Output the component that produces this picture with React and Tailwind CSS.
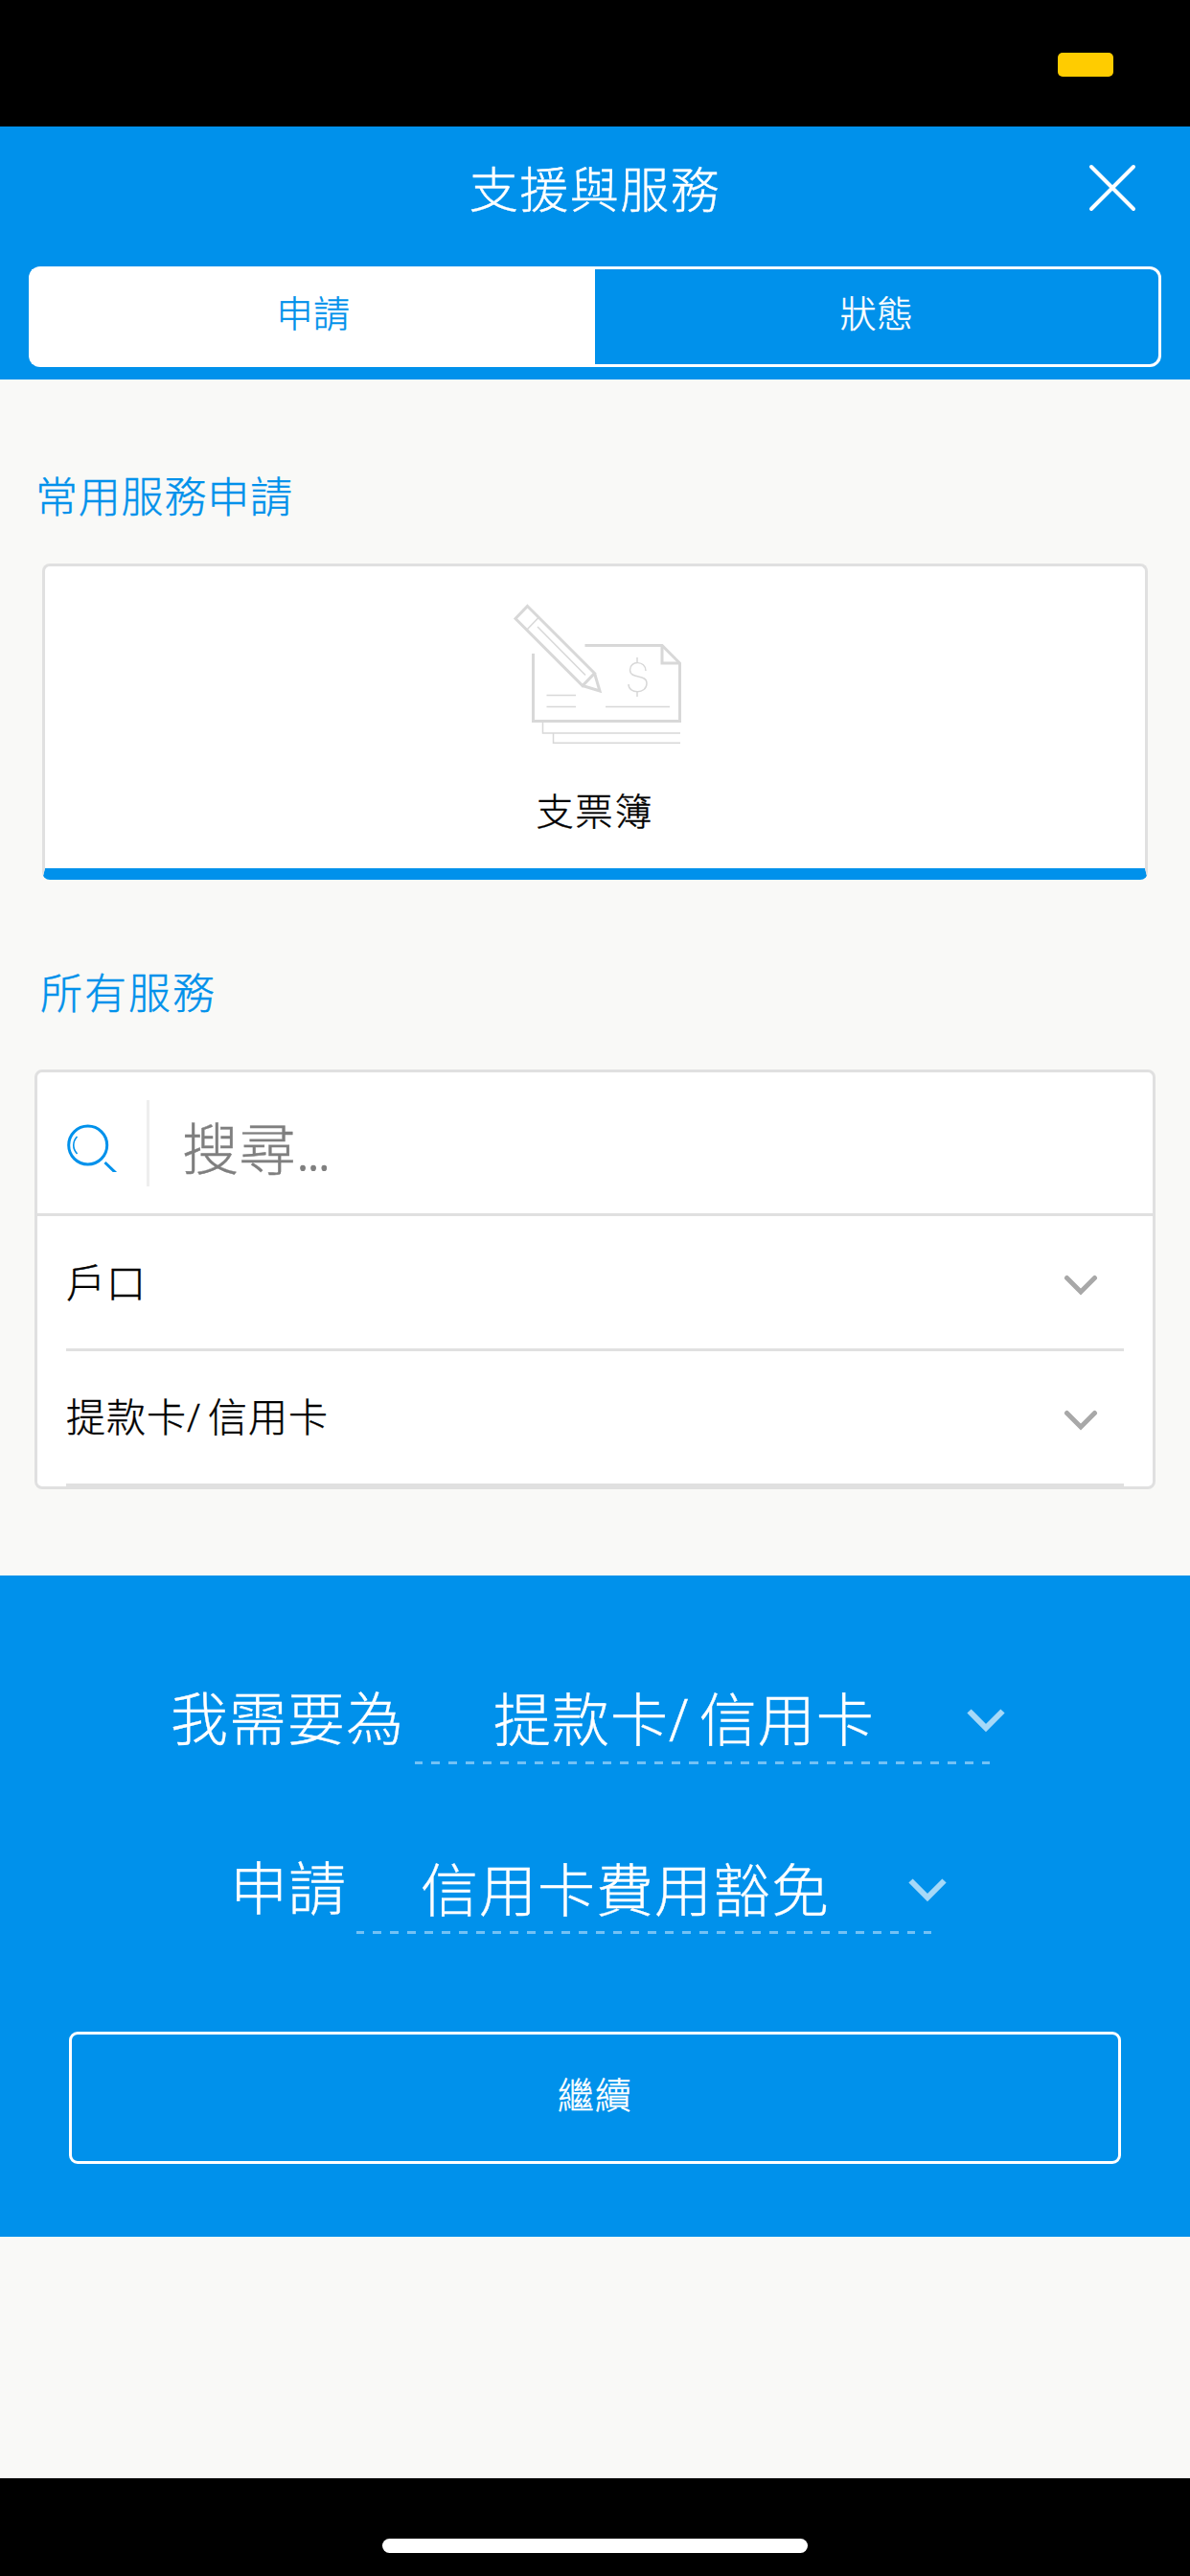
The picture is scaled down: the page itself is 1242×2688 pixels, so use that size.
const ChevronGrey = () => (
  <svg className="mt-[5px]" width="36" height="22" viewBox="0 0 36 22" fill="none" stroke="#a8a8a8" strokeWidth="5" strokeLinecap="round">
    <path d="M3.5 3.5 L18 18 L32.5 3.5" />
  </svg>
);

const ChevronLight = () => (
  <svg width="40" height="25" viewBox="0 0 40 25" fill="none" stroke="#a6d9f8" strokeWidth="6">
    <path d="M2.5 2.5 L20 20 L37.5 2.5" />
  </svg>
);

const ChequeIcon = () => (
  <svg width="180" height="150" viewBox="530 626 180 150" fill="none" stroke="#d8d8d8">
    <g strokeWidth="3">
      <path d="M549.5 632.5 L619.5 702.5 L607 715.5 L537 645.5 Z" />
      <path d="M619.5 702.5 L625 721 L607 715.5" />
      <path d="M555.5 682 V752.5 H708.5 V692 L690 673.5 H609.5" />
      <path d="M690 673.5 V692 H708.5" />
    </g>
    <g strokeWidth="1.5">
      <path d="M561 644.5 L548.5 657.5 M560 654 L610 704.5 M618.5 704 L607.5 715" />
      <path d="M569.5 725.5 H600 M569.5 737.5 H600 M631 737.5 H698" />
      <path d="M565.5 753 V765 H709 M576.5 765 V775.2 H709" />
      <path d="M664 686 V692 M664 721.5 V727" />
      <path d="M673 700 C673 689 656.5 689 656.5 699 C656.5 709 674 703 674 713 C674 724.5 655 724.5 655 714" />
    </g>
  </svg>
);

const CardLabel = () => (
  <>
    提款卡
    <span className="font-['Open_Sans',sans-serif] mr-[0.17em]">/</span>
    信用卡
  </>
);

const ServiceRow = ({ children }) => (
  <li className="mx-[30px] h-[141px] border-b-3 border-[#e0e0e0] flex items-center justify-between pr-[27px]">
    <span className="pb-[5px] text-[41px] leading-[60px] tracking-[1px] text-black">{children}</span>
    <ChevronGrey />
  </li>
);

const Picker = ({ prefix, children, className, valueClass }) => (
  <div className={`flex h-[92px] ${className}`}>
    <span className="shrink-0 leading-[75px]">{prefix}</span>
    <div className="w-[616px] flex flex-col">
      <div className="flex h-[86px] items-center justify-between">
        <span className={`pb-1.5 whitespace-nowrap ${valueClass}`}>{children}</span>
        <ChevronLight />
      </div>
      <div className="w-[600px] h-[3px] shrink-0 bg-[repeating-linear-gradient(90deg,#73c2f5_0_7.5px,transparent_7.5px_16.5px,#73c2f5_16.5px_18px)]" />
    </div>
  </div>
);

const App = () => {
  return (
    <div className="w-[1242px] h-[2688px] flex flex-col bg-[#f9f9f7] font-light font-['Noto_Sans_CJK_TC',sans-serif] [-webkit-text-stroke:0.4px]">
      {/* Status bar */}
      <div className="h-[132px] shrink-0 bg-black flex justify-end pt-[55px] pr-20">
        <div className="w-[58px] h-[25px] rounded-[5px] bg-[#ffcc00]" />
      </div>

      {/* Header */}
      <header className="h-[264px] shrink-0 bg-[#0091eb] text-white flex flex-col px-[30px]">
        <div className="h-[146px] shrink-0 grid grid-cols-[1fr_auto_1fr] items-center">
          <span />
          <h1 className="text-[51px] leading-[80px] tracking-[1.5px] pb-[21px]">支援與服務</h1>
          <button className="justify-self-end mr-[26px] mb-[18px]">
            <svg width="50" height="50" viewBox="0 0 50 50" stroke="white" strokeWidth="4" strokeLinecap="round">
              <path d="M3 3 L47 47 M47 3 L3 47" />
            </svg>
          </button>
        </div>
        <div className="h-[105px] grid grid-cols-2 border-3 border-white rounded-xl text-[38px] tracking-[0.5px]">
          <button className="bg-white text-[#0091eb] pb-3">申請</button>
          <button className="pb-3">狀態</button>
        </div>
      </header>

      {/* Popular services */}
      <section className="h-[522px] shrink-0 pt-[88px]">
        <h2 className="ml-[37px] text-[44px] leading-[64px] tracking-[0.8px] text-[#0091eb]">常用服務申請</h2>
        <div className="mx-[44px] mt-[40px] h-[330px] bg-white border-3 border-b-12 border-[#e0e0e0] border-b-[#0091eb] rounded-lg flex flex-col items-center">
          <div className="mt-[35px] h-[150px]">
            <ChequeIcon />
          </div>
          <span className="mt-[40px] text-[39px] leading-[56px] tracking-[2px] text-black">支票簿</span>
        </div>
      </section>

      {/* All services */}
      <section className="h-[726px] shrink-0 pt-[84px]">
        <h2 className="ml-[42px] text-[44px] leading-[64px] tracking-[2px] text-[#0091eb]">所有服務</h2>
        <div className="mx-[36px] mt-[50px] h-[438px] bg-white border-3 border-[#e0e0e0] rounded-lg">
          <div className="h-[150px] border-b-3 border-[#e0e0e0] flex items-center">
            <svg className="ml-[30px]" width="54" height="61" viewBox="0 0 54 61" fill="none" stroke="#0091eb">
              <circle cx="22.7" cy="33" r="20" strokeWidth="3" />
              <path d="M11.5 24 C6.5 29.5 6.5 36.5 11.5 42" strokeWidth="1.6" />
              <path d="M40.5 51 L54 64" strokeWidth="3" />
            </svg>
            <div className="ml-[30px] w-[3px] h-[90px] bg-[#eeeeee]" />
            <span className="ml-[34px] pt-2 text-[59px] leading-[80px] tracking-[0.5px] text-[#7f7f7f]">
              搜尋<span className="font-['Open_Sans',sans-serif] tracking-[-3px] [-webkit-text-stroke:1px]">...</span>
            </span>
          </div>
          <ul>
            <ServiceRow>戶口</ServiceRow>
            <ServiceRow>
              <CardLabel />
            </ServiceRow>
          </ul>
        </div>
      </section>

      {/* Request builder */}
      <section className="h-[690px] shrink-0 bg-[#0091eb] text-white pt-[108px] text-[60px] tracking-[1px]">
        <Picker prefix="我需要為" className="ml-[178px] gap-[11px]" valueClass="ml-[82px]">
          <CardLabel />
        </Picker>
        <Picker prefix="申請" className="ml-[240px] mt-[85px] gap-[10px]" valueClass="ml-[67px]">
          信用卡費用豁免
        </Picker>
        <button className="block w-[1098px] h-[138px] ml-[72px] mt-[99px] pb-3 border-3 border-white rounded-[9px] text-[38px] tracking-[1px]">
          繼續
        </button>
      </section>

      {/* Home indicator */}
      <footer className="mt-auto h-[102px] shrink-0 bg-black flex justify-center pt-[63px]">
        <div className="w-[444px] h-[15px] rounded-full bg-white" />
      </footer>
    </div>
  );
};

export default App;
